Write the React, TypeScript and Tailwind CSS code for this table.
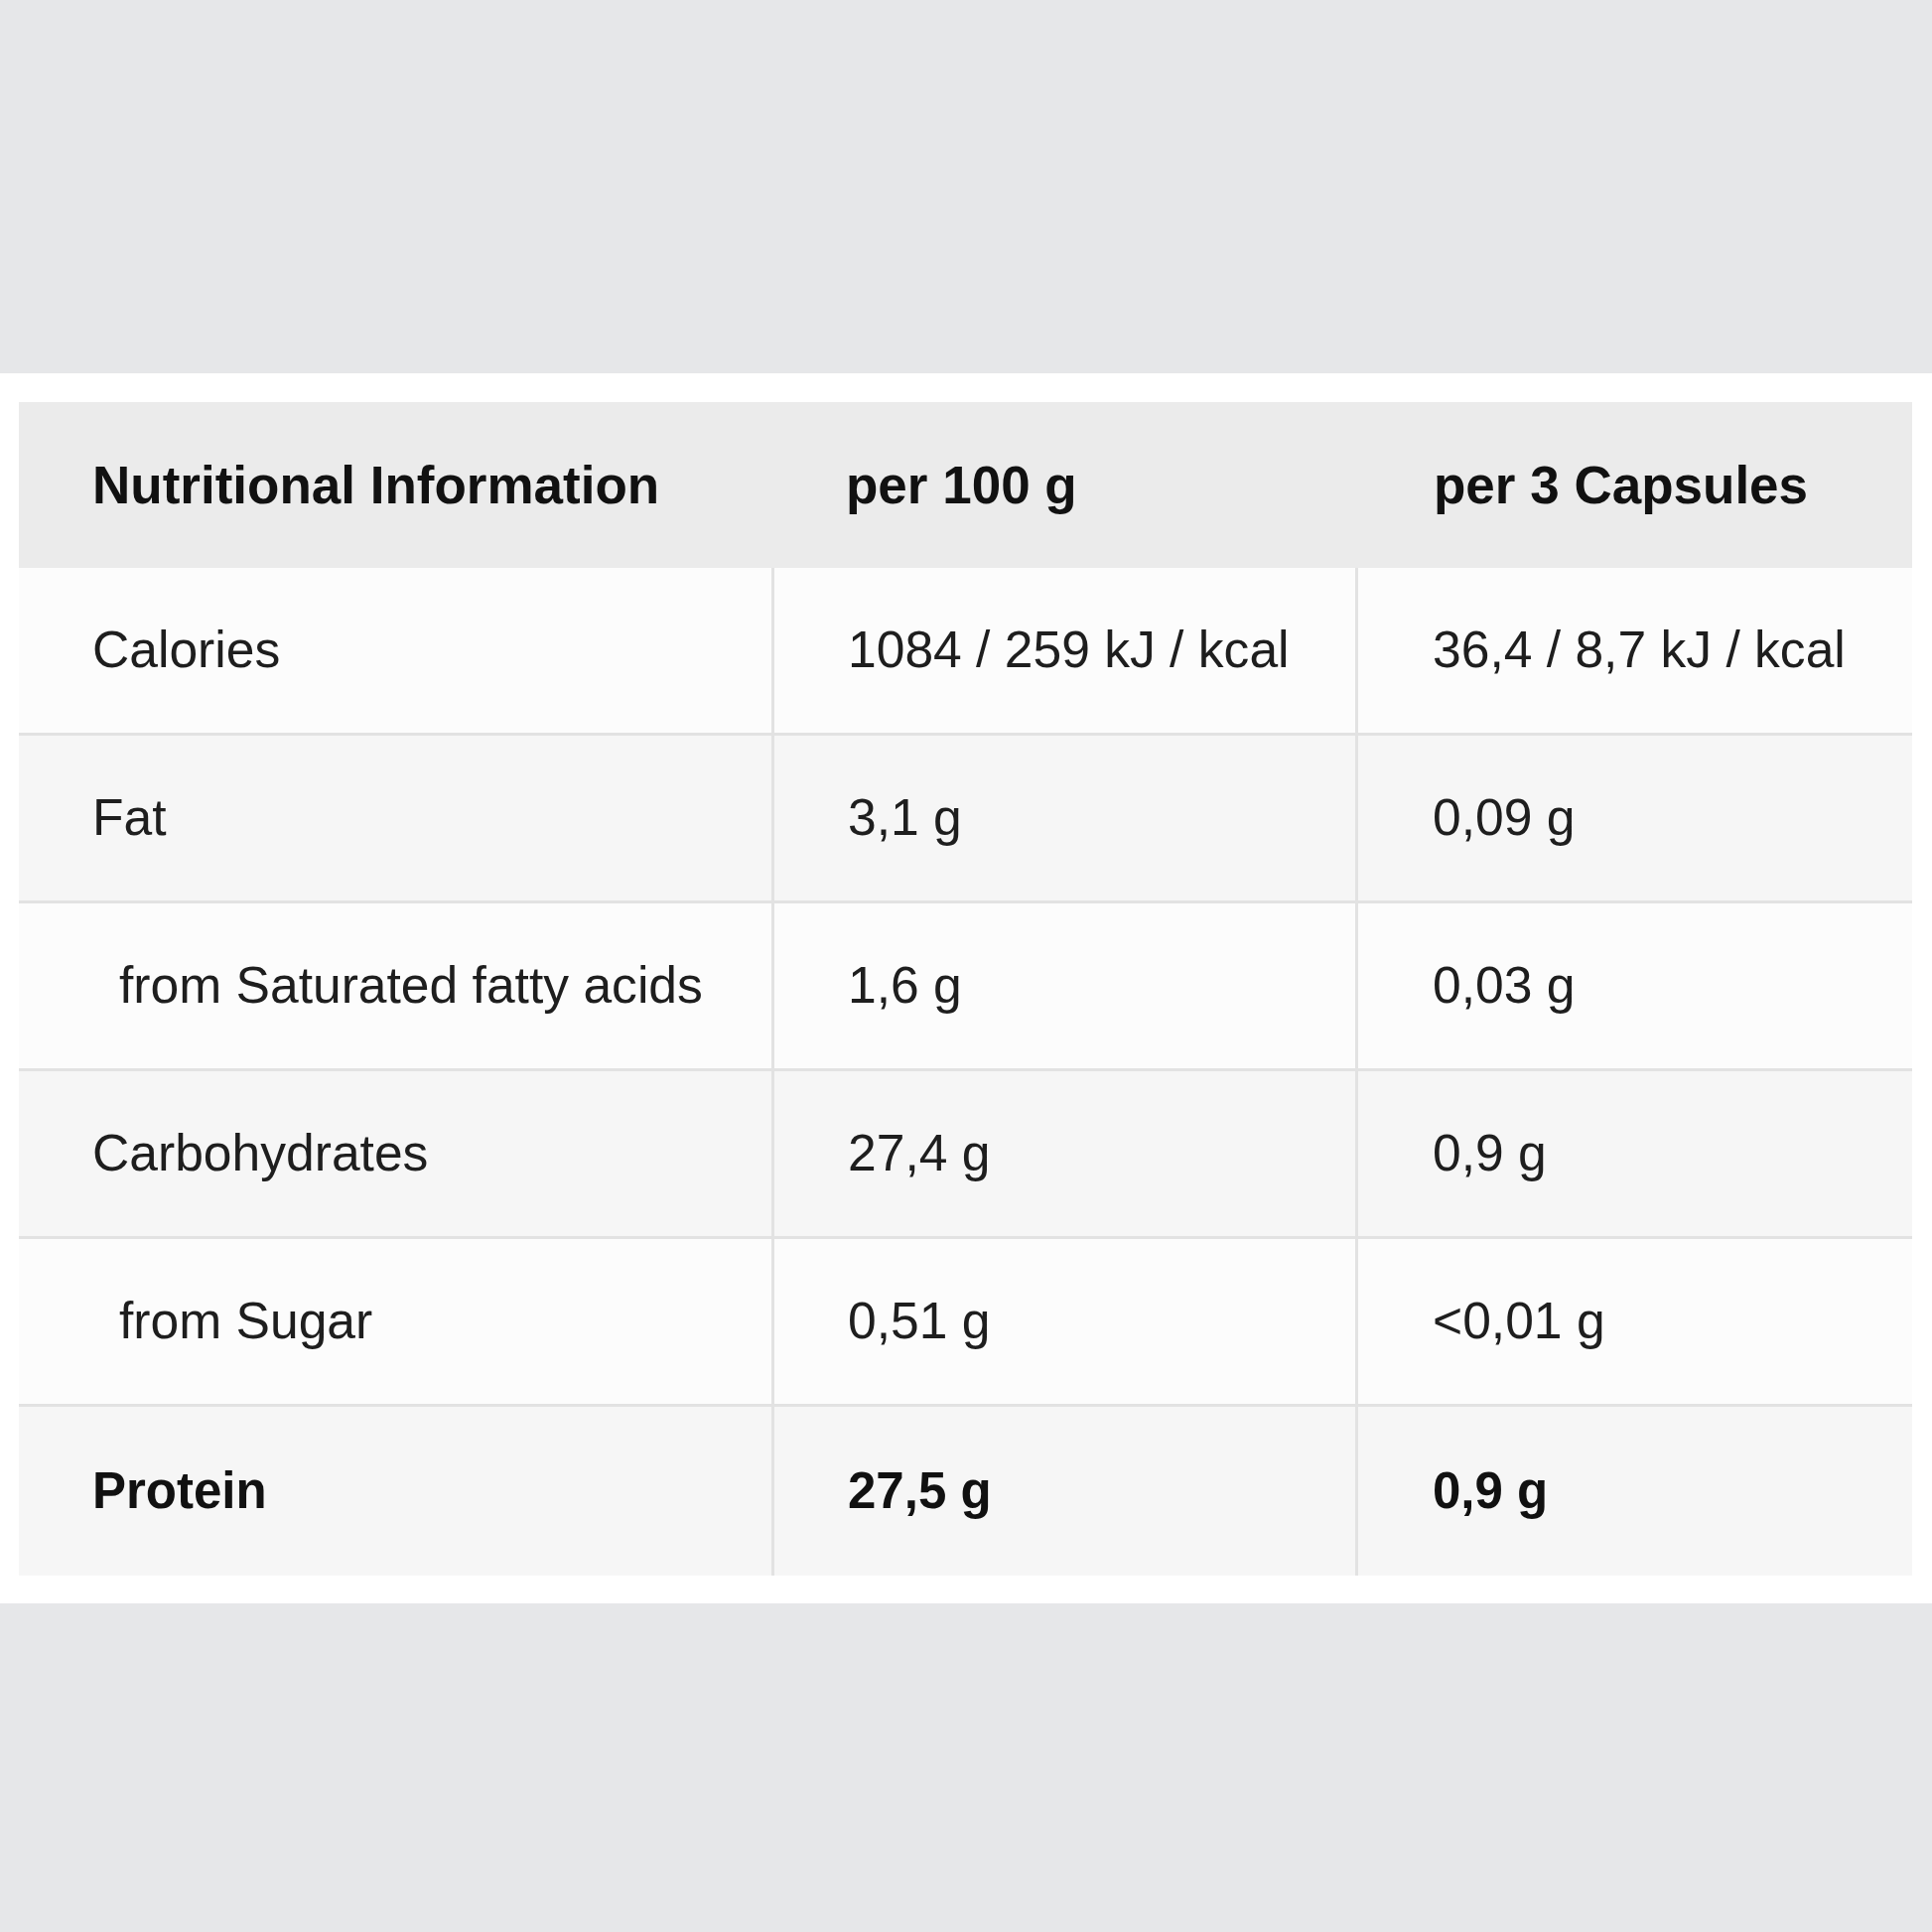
const rows = [
  { label: "Calories", per100: "1084 / 259 kJ / kcal", perServing: "36,4 / 8,7 kJ / kcal", indent: false, bold: false, shaded: false },
  { label: "Fat", per100: "3,1 g", perServing: "0,09 g", indent: false, bold: false, shaded: true },
  { label: "from Saturated fatty acids", per100: "1,6 g", perServing: "0,03 g", indent: true, bold: false, shaded: false },
  { label: "Carbohydrates", per100: "27,4 g", perServing: "0,9 g", indent: false, bold: false, shaded: true },
  { label: "from Sugar", per100: "0,51 g", perServing: "<0,01 g", indent: true, bold: false, shaded: false },
  { label: "Protein", per100: "27,5 g", perServing: "0,9 g", indent: false, bold: true, shaded: true },
];

export default function App() {
  return (
    <div
      className="flex h-[1946px] w-[1946px] flex-col bg-[#e6e7e9]"
      style={{ fontFamily: '"Liberation Sans", Arial, sans-serif' }}
    >
      <div className="h-[376px]" />

      <div className="bg-white px-[19px] pb-[28px] pt-[29px]">
        <div className="w-[1907px]">
          {/* header */}
          <div className="flex h-[167px] items-center bg-[#ebebeb] text-[53px] font-bold text-[#111]">
            <div className="w-[761px] pl-[74px]">Nutritional Information</div>
            <div className="w-[588px] pl-[72px]">per 100 g</div>
            <div className="flex-1 pl-[76px]">per 3 Capsules</div>
          </div>

          {rows.map((row, i) => (
            <div
              key={row.label}
              className={`flex text-[#1e1e1e] ${
                row.shaded ? "bg-[#f6f6f6]" : "bg-[#fcfcfc]"
              } ${row.bold ? "text-[51px] font-bold text-[#111]" : "text-[51.6px]"} ${
                i < rows.length - 1 ? "h-[169px] border-b-[3px] border-[#e2e2e2]" : "h-[170px]"
              }`}
            >
              <div
                className={`flex w-[761px] items-center border-r-[3px] border-[#e2e2e2] ${
                  row.indent ? "pl-[101px]" : "pl-[74px]"
                }`}
              >
                {row.label}
              </div>
              <div className="flex w-[588px] items-center border-r-[3px] border-[#e2e2e2] pl-[74px]">
                {row.per100}
              </div>
              <div className="flex flex-1 items-center pl-[75px]">{row.perServing}</div>
            </div>
          ))}
        </div>
      </div>
    </div>
  );
}
